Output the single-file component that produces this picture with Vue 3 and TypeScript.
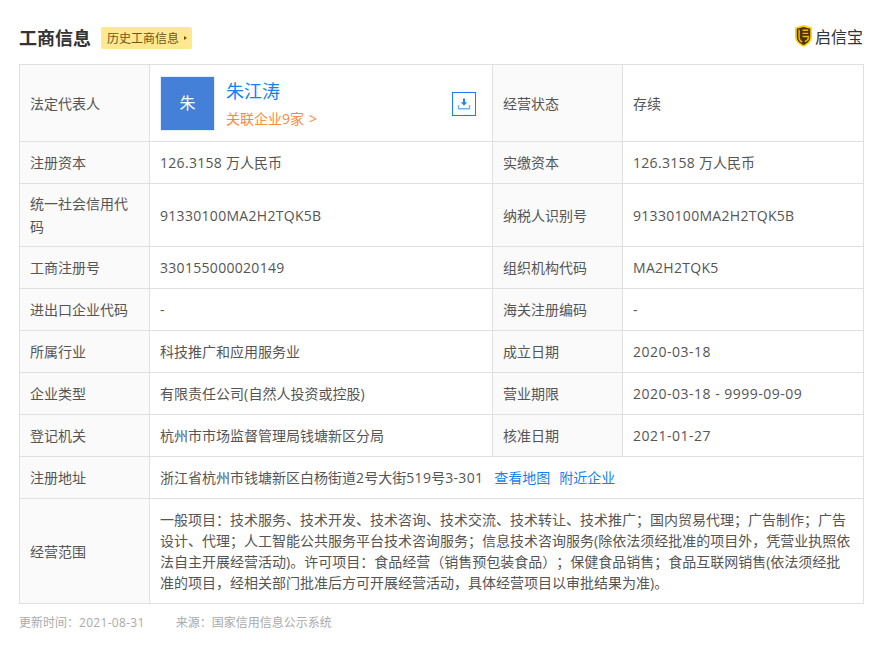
<script setup lang="ts">
interface Row {
  label: string
  value: string
  label2: string
  value2: string
}

const rows: Row[] = [
  { label: '注册资本', value: '126.3158 万人民币', label2: '实缴资本', value2: '126.3158 万人民币' },
  { label: '统一社会信用代码', value: '91330100MA2H2TQK5B', label2: '纳税人识别号', value2: '91330100MA2H2TQK5B' },
  { label: '工商注册号', value: '330155000020149', label2: '组织机构代码', value2: 'MA2H2TQK5' },
  { label: '进出口企业代码', value: '-', label2: '海关注册编码', value2: '-' },
  { label: '所属行业', value: '科技推广和应用服务业', label2: '成立日期', value2: '2020-03-18' },
  { label: '企业类型', value: '有限责任公司(自然人投资或控股)', label2: '营业期限', value2: '2020-03-18 - 9999-09-09' },
  { label: '登记机关', value: '杭州市市场监督管理局钱塘新区分局', label2: '核准日期', value2: '2021-01-27' }
]

// latin runs get a little tracking, the font is narrower than the original one
function parts(text: string) {
  return text.split(/([\x21-\x7e][\x20-\x7e]*)/).filter(Boolean).map((t) => ({
    text: t,
    cls: /^\d{4}-/.test(t) ? 'date' : /^[\x21-\x7e]/.test(t) ? 'latin' : ''
  }))
}
</script>

<template>
  <div class="page">
    <div class="head">
      <h2 class="title">工商信息</h2>
      <span class="history">历史工商信息<i class="arrow"></i></span>
      <div class="logo">
        <svg width="17" height="22" viewBox="0 0 16 21">
          <path d="M8 0 16 2.300v9.200c0 4.500-3.600 7.300-8 9.500-4.400-2.200-8-5-8-9.500V2.300z" fill="#ffd000" />
          <path d="M8 1.800 14.400 3.600v7.800c0 3.600-2.900 5.900-6.400 7.800-3.500-1.900-6.400-4.200-6.400-7.800V3.600z" fill="#4a3206" />
          <path d="M3.800 4.300v7.700c0 2 1.100 3.300 3 4.300M7 5h5.500M7 8h5.500M7 11h5.500v2c0 1.100-1.500 2-3.200 2.800" fill="none" stroke="#f7b900" stroke-width="1.400" />
        </svg>
        <span>启信宝</span>
      </div>
    </div>

    <table class="info">
      <colgroup>
        <col class="c-label" />
        <col class="c-value" />
        <col class="c-label2" />
        <col />
      </colgroup>
      <tbody>
        <tr class="legal">
          <th>法定代表人</th>
          <td>
            <div class="person">
              <div class="avatar">朱</div>
              <div class="person-text">
                <a class="name">朱江涛</a>
                <a class="related">关联企业9家<span class="more">&gt;</span></a>
              </div>
              <button class="download" type="button" aria-label="下载">
                <svg width="14" height="14" viewBox="0 0 14 14">
                  <path d="M6 1.500h2v3.700h2.200L7 8.800 3.800 5.200H6z" fill="#1f86f5" />
                  <path d="M1.500 8v3.800h11V8" fill="none" stroke="#6db3f8" stroke-width="1.400" />
                </svg>
              </button>
            </div>
          </td>
          <th>经营状态</th>
          <td>存续</td>
        </tr>
        <tr v-for="row in rows" :key="row.label">
          <th>{{ row.label }}</th>
          <td><span v-for="p in parts(row.value)" :key="p.text" :class="p.cls">{{ p.text }}</span></td>
          <th>{{ row.label2 }}</th>
          <td><span v-for="p in parts(row.value2)" :key="p.text" :class="p.cls">{{ p.text }}</span></td>
        </tr>
        <tr>
          <th>注册地址</th>
          <td colspan="3">
            <span v-for="(p, i) in parts('浙江省杭州市钱塘新区白杨街道2号大街519号3-301')" :key="i" :class="p.cls">{{ p.text }}</span>
            <a class="link first">查看地图</a>
            <a class="link">附近企业</a>
          </td>
        </tr>
        <tr class="scope">
          <th>经营范围</th>
          <td colspan="3">一般项目：技术服务、技术开发、技术咨询、技术交流、技术转让、技术推广；国内贸易代理；广告制作；广告设计、代理；人工智能公共服务平台技术咨询服务；信息技术咨询服务(除依法须经批准的项目外，凭营业执照依法自主开展经营活动)。许可项目：食品经营（销售预包装食品）；保健食品销售；食品互联网销售(依法须经批准的项目，经相关部门批准后方可开展经营活动，具体经营项目以审批结果为准)。</td>
        </tr>
      </tbody>
    </table>

    <div class="foot">
      <span>更新时间：<span class="latin">2021-08-31</span></span>
      <span>来源：国家信用信息公示系统</span>
    </div>
  </div>
</template>

<style scoped>
.page {
  width: 845px;
  padding: 25px 13px 0 19px;
  font-family: "Open Sans", "Noto Sans CJK SC", sans-serif;
  font-size: 14px;
  color: #555;
}

.latin {
  letter-spacing: 0.3px;
}

.date {
  letter-spacing: 0.5px;
}

.head {
  display: flex;
  align-items: center;
  height: 26px;
  margin-bottom: 13px;
}

.title {
  margin: 0;
  font-size: 18px;
  font-weight: 700;
  line-height: 26px;
  color: #333;
}

.history {
  display: flex;
  align-items: center;
  height: 22px;
  margin-left: 10px;
  padding: 0 5px 0 6px;
  border-radius: 2px;
  background: #ffe88f;
  font-size: 12px;
  color: #6b5320;
}

.arrow {
  margin-left: 5px;
  border-left: 3px solid #6b4f12;
  border-top: 2.500px solid transparent;
  border-bottom: 2.500px solid transparent;
}

.logo {
  display: flex;
  align-items: center;
  gap: 3px;
  margin: 0 1px 4px auto;
  font-size: 16px;
  color: #333;
}

.info {
  width: 845px;
  border-collapse: collapse;
  table-layout: fixed;
}

.c-label {
  width: 130px;
}

.c-value {
  width: 343px;
}

.c-label2 {
  width: 130px;
}

.info th,
.info td {
  height: 42px;
  padding: 8px 10px;
  border: 1px solid #e0e0e0;
  box-sizing: border-box;
  font-size: 14px;
  font-weight: 400;
  line-height: 23px;
  text-align: left;
  text-spacing-trim: space-all;
  color: #555;
}

.info th {
  background: #fafafa;
}

.legal td:first-of-type {
  padding: 0 16px 0 10px;
}

.legal th,
.legal td {
  height: 77px;
}

.person {
  display: flex;
  align-items: center;
}

.avatar {
  display: flex;
  align-items: center;
  justify-content: center;
  width: 55px;
  height: 55px;
  box-sizing: border-box;
  border: 1px solid #e6eefa;
  background: #4480d8;
  font-size: 16px;
  color: #fff;
}

.person-text {
  display: flex;
  flex-direction: column;
  margin-left: 11px;
  height: 55px;
  justify-content: space-between;
}

.name {
  margin-top: 1px;
  font-size: 18px;
  line-height: 28px;
  color: #1482f0;
}

.related {
  margin-bottom: 2px;
  font-size: 14px;
  line-height: 20px;
  color: #ff8a3c;
}

.more {
  margin-left: 5px;
}

.download {
  display: flex;
  align-items: center;
  justify-content: center;
  width: 24px;
  height: 24px;
  margin: 2px 0 0 auto;
  padding: 0;
  border: 1px solid #0f80ff;
  background: #fff;
}

.link {
  color: #1482f0;
}

.link.first {
  margin-left: 11px;
}

.link + .link {
  margin-left: 9px;
}

.scope th,
.scope td {
  height: 105px;
  line-height: 21px;
}

.foot {
  display: flex;
  gap: 31px;
  margin-top: 11px;
  font-size: 12px;
  line-height: 16px;
  color: #aaa;
}
</style>
